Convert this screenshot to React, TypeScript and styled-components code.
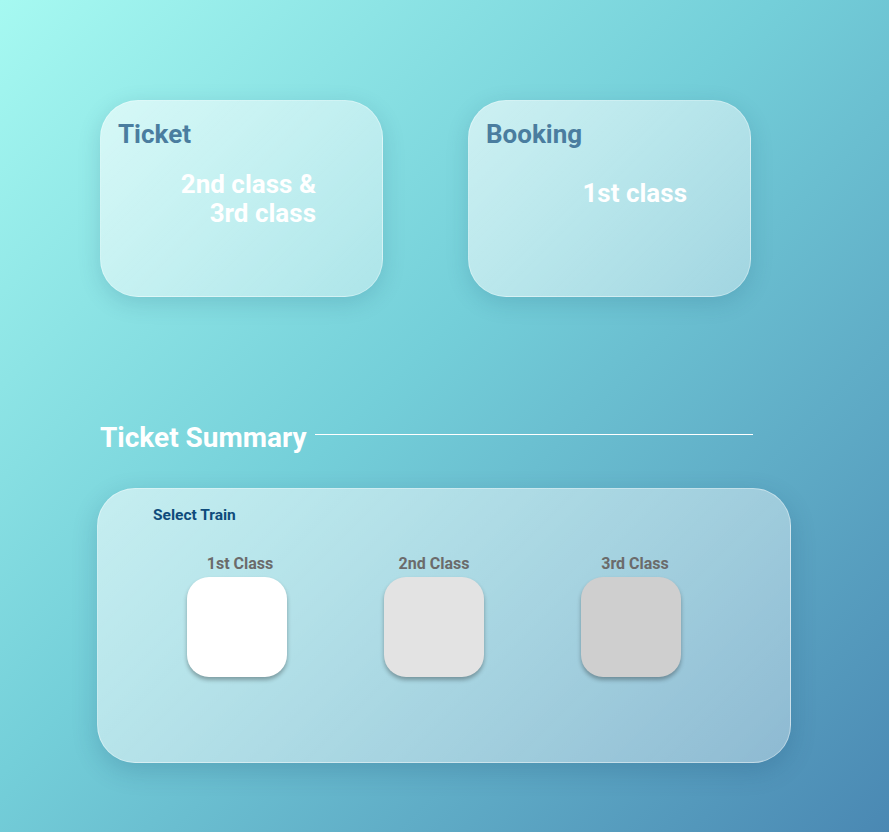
import React from "react";
import styled, { createGlobalStyle } from "styled-components";

const GlobalStyle = createGlobalStyle`
    html, body {
        margin: 0;
        padding: 0;
    }
    body {
        font-family: Roboto, "Liberation Sans", sans-serif;
    }
`;

const Page = styled.div`
    box-sizing: border-box;
    width: 889px;
    min-height: 832px;
    padding: 100px 0 0 100px;
    background: linear-gradient(135deg, #a6f9f1 0%, #74cfd9 45%, #4a88b3 100%);
`;

const CardsRow = styled.div`
    display: flex;
    gap: 85px;
`;

const GlassCard = styled.div`
    box-sizing: border-box;
    width: 283px;
    height: 197px;
    padding: 18px 0 0 17px;
    border-radius: 38px;
    border: 1px solid rgba(255, 255, 255, 0.35);
    background: linear-gradient(135deg, rgba(255, 255, 255, 0.6), rgba(255, 255, 255, 0.38));
    box-shadow: 0 6px 22px rgba(30, 80, 110, 0.18);
`;

const CardTitle = styled.div`
    font-size: 26px;
    line-height: 30px;
    font-weight: 700;
    color: #4a7d9f;
`;

const CardBody = styled.div<{ $top: number; $right: number }>`
    margin-top: ${({ $top }) => $top}px;
    padding-right: ${({ $right }) => $right}px;
    text-align: right;
    font-size: 26px;
    line-height: 29px;
    font-weight: 700;
    color: #ffffff;
`;

const SummaryHeader = styled.div`
    display: flex;
    align-items: center;
    gap: 8px;
    width: 653px;
    margin-top: 125px;
`;

const SummaryTitle = styled.h2`
    margin: 0;
    font-size: 28px;
    line-height: 32px;
    font-weight: 700;
    color: #ffffff;
    white-space: nowrap;
`;

const Rule = styled.div`
    flex: 1;
    height: 1px;
    margin-bottom: 8px;
    background: #ffffff;
`;

const SummaryCard = styled.div`
    box-sizing: border-box;
    width: 694px;
    height: 275px;
    margin: 34px 0 0 -3px;
    padding: 17px 0 0 55px;
    border-radius: 38px;
    border: 1px solid rgba(255, 255, 255, 0.4);
    background: linear-gradient(135deg, rgba(255, 255, 255, 0.55), rgba(255, 255, 255, 0.35));
    box-shadow: 0 8px 26px rgba(20, 60, 100, 0.2);
`;

const SelectLabel = styled.div`
    font-size: 15.5px;
    line-height: 18px;
    font-weight: 700;
    color: #0e4b7b;
`;

const ClassGrid = styled.div`
    display: grid;
    grid-template-columns: repeat(3, 120px);
    column-gap: 77px;
    margin: 31px 0 0 24px;
`;

const ClassOption = styled.div`
    display: flex;
    flex-direction: column;
    align-items: center;
    gap: 4px;
`;

const ClassName = styled.div<{ $shift: number }>`
    margin-left: ${({ $shift }) => $shift}px;
    font-size: 16px;
    line-height: 18px;
    font-weight: 700;
    color: #6b6b6b;
`;

const ClassTile = styled.button<{ $shade: string }>`
    width: 100px;
    height: 100px;
    padding: 0;
    border: none;
    border-radius: 22px;
    background: ${({ $shade }) => $shade};
    box-shadow: 0 3px 4px rgba(0, 0, 0, 0.3);
    cursor: pointer;
`;

const classes = [
    { name: "1st Class", shade: "#ffffff", shift: 6 },
    { name: "2nd Class", shade: "#e3e3e3", shift: 0 },
    { name: "3rd Class", shade: "#cfcfcf", shift: 8 },
];

export default function App() {
    return <>
        <GlobalStyle />
        <Page>
            <CardsRow>
                <GlassCard>
                    <CardTitle>Ticket</CardTitle>
                    <CardBody $top={21} $right={66}>2nd class &amp;<br />3rd class</CardBody>
                </GlassCard>
                <GlassCard>
                    <CardTitle>Booking</CardTitle>
                    <CardBody $top={30} $right={63}>1st class</CardBody>
                </GlassCard>
            </CardsRow>

            <SummaryHeader>
                <SummaryTitle>Ticket Summary</SummaryTitle>
                <Rule />
            </SummaryHeader>

            <SummaryCard>
                <SelectLabel>Select Train</SelectLabel>
                <ClassGrid>
                    {classes.map(c =>
                        <ClassOption key={c.name}>
                            <ClassName $shift={c.shift}>{c.name}</ClassName>
                            <ClassTile $shade={c.shade} aria-label={c.name} />
                        </ClassOption>
                    )}
                </ClassGrid>
            </SummaryCard>
        </Page>
    </>
}
